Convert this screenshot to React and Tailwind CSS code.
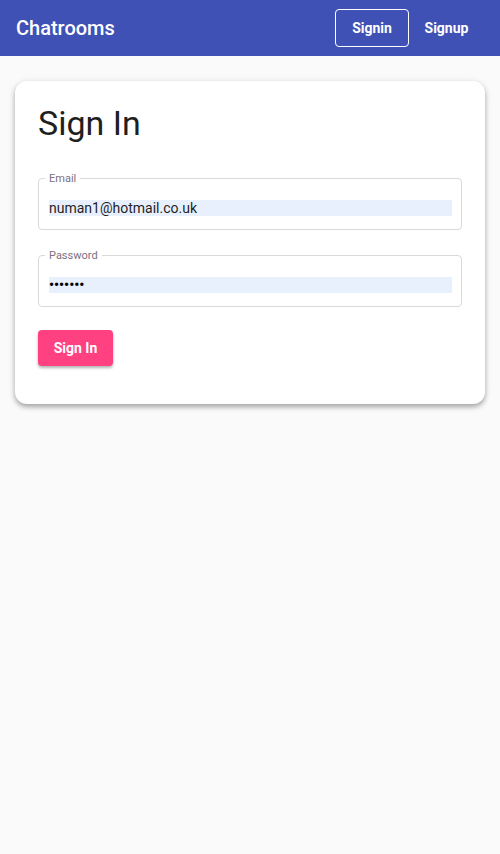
import React from "react";

function Field({ label, value }) {
  return (
    <div className="relative h-[52px] rounded-[4px] border border-[#d9d9d9]">
      <span className="absolute left-[6px] top-[-7px] bg-white px-[4px] text-[11px] leading-[14px] text-[#7b7082]">
        {label}
      </span>
      <div className="absolute left-[10px] right-[9px] top-[21px] h-[16px] bg-[#e8f0fe] text-[14px] leading-[16px] text-[#1f1f1f]">
        {value}
      </div>
    </div>
  );
}

export default function App() {
  return (
    <div className="min-h-screen bg-[#fafafa] font-['Roboto',sans-serif]">
      <header className="flex h-14 items-center justify-between bg-[#3f51b5] pl-4 pr-4 text-white">
        <div className="text-[20px] font-medium leading-none">Chatrooms</div>
        <div className="flex items-center">
          <div className="flex h-[38px] w-[74px] items-center justify-center rounded-[4px] border border-white text-[14px] font-bold">
            Signin
          </div>
          <div className="flex h-[38px] w-[75px] items-center justify-center text-[14px] font-bold">
            Signup
          </div>
        </div>
      </header>
      <main className="px-[15px] pt-[25px]">
        <div className="rounded-[12px] bg-white px-[23px] pb-[38px] pt-[21px] shadow-[0_3px_5px_rgba(0,0,0,0.3),0_1px_10px_rgba(0,0,0,0.08)]">
          <h1 className="text-[34px] font-normal leading-[42px] text-[#1f1f1f]">Sign In</h1>
          <div className="mt-[34px]">
            <Field label="Email" value="numan1@hotmail.co.uk" />
          </div>
          <div className="mt-[25px]">
            <Field
              label="Password"
              value={<span className="text-[14px] font-bold tracking-[0px] text-black">•••••••</span>}
            />
          </div>
          <button className="mt-[23px] flex h-[36px] w-[75px] items-center justify-center rounded-[4px] bg-[#ff4081] text-[14px] font-bold text-white shadow-[0_2px_3px_rgba(0,0,0,0.3)]">
            Sign In
          </button>
        </div>
      </main>
    </div>
  );
}
